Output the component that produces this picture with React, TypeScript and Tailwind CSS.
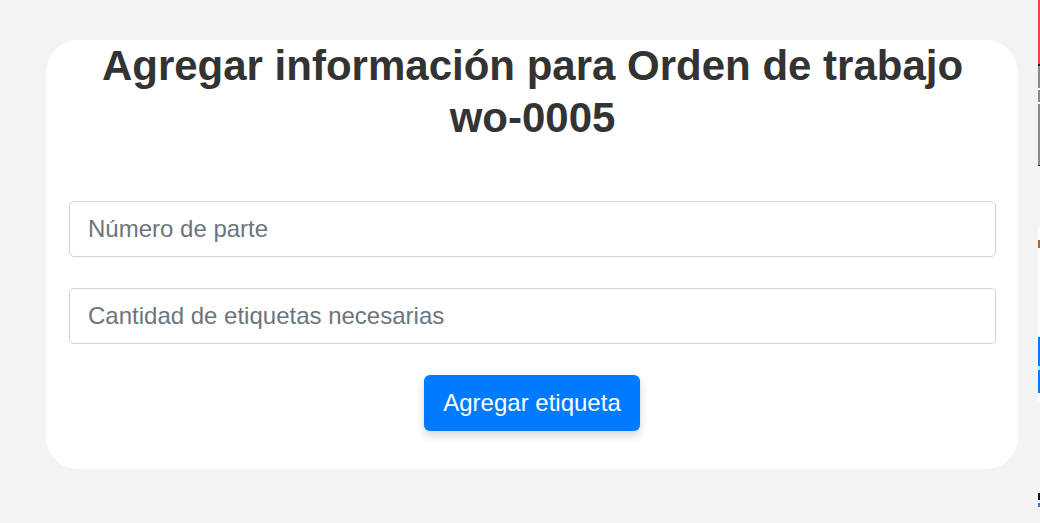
export default function App() {
  return (
    <div className="flex min-h-[523px] w-[1040px] bg-[#f3f3f3] font-['Liberation_Sans',Arial,sans-serif]">
      <main className="w-[1038px] shrink-0 pt-[40px] pl-[46px]">
        <section className="flex w-[972px] flex-col rounded-[32px] bg-white pl-[23px] pr-[22px] pb-[38px]">
          <h1 className="text-center text-[42px] font-bold leading-[52px] text-[#333]">
            Agregar información para Orden de trabajo wo-0005
          </h1>

          <form className="mt-[57px] flex flex-col gap-[31px]">
            <input
              type="text"
              placeholder="Número de parte"
              className="h-[56px] w-full rounded-[5px] border border-[#ced4da] px-[18px] text-[24px] text-[#495057] placeholder:text-[#6c757d] outline-none"
            />
            <input
              type="text"
              placeholder="Cantidad de etiquetas necesarias"
              className="h-[56px] w-full rounded-[5px] border border-[#ced4da] px-[18px] text-[24px] text-[#495057] placeholder:text-[#6c757d] outline-none"
            />
            <div className="flex justify-center pr-px">
              <button
                type="button"
                className="h-[56px] w-[216px] rounded-[6px] bg-[#007bff] text-[24px] text-white shadow-[0_4px_10px_rgba(0,0,0,0.18)]"
              >
                Agregar etiqueta
              </button>
            </div>
          </form>
        </section>
      </main>

      {/* sliver of the neighbouring window */}
      <aside className="flex w-[2px] shrink-0 flex-col">
        <div className="h-[64px] bg-[#f04438]" />
        <div className="h-[2px] bg-[#222]" />
        <div className="h-[22px] bg-[#8a8a8a]" />
        <div className="h-[2px] bg-white" />
        <div className="h-[12px] bg-[#8a8a8a]" />
        <div className="h-[2px] bg-white" />
        <div className="h-[61px] bg-[#8a8a8a]" />
        <div className="h-[1px] bg-[#222]" />
        <div className="h-[60px]" />
        <div className="h-[14px] bg-white" />
        <div className="h-[8px] bg-[#9a6a3a]" />
        <div className="h-[89px] bg-white" />
        <div className="h-[29px] bg-[#007bff]" />
        <div className="h-[4px] bg-[#cfe6ff]" />
        <div className="h-[23px] bg-[#007bff]" />
        <div className="h-[8px] bg-white" />
        <div className="h-[92px]" />
        <div className="h-[7px] bg-[#111]" />
        <div className="h-[3px]" />
        <div className="h-[4px] bg-[#1a7bf0]" />
      </aside>
    </div>
  );
}
